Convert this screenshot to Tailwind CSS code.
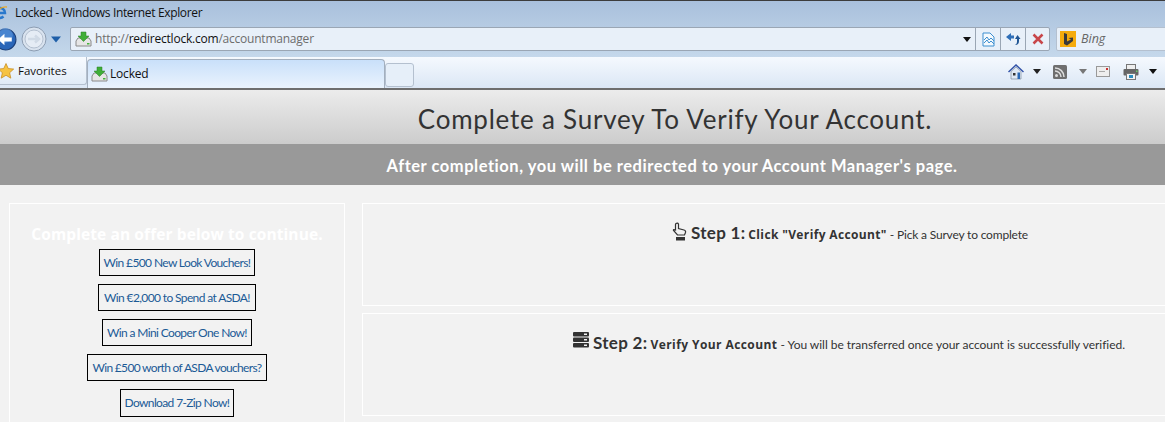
<!DOCTYPE html>
<html lang="en">
  <head>
    <meta charset="UTF-8" />
    <script src="https://cdn.jsdelivr.net/npm/@tailwindcss/browser@4"></script>
    <title>Locked</title>
  </head>
  <body class="bg-[#f2f2f2] w-[1165px] h-[422px] overflow-hidden font-['Lato',sans-serif]">
    <!-- browser chrome -->
    <div class="h-[90px] border-t border-t-[#3c3c3c] border-b-2 border-b-[#6e6e6e] flex flex-col">
      <div class="h-[56px] bg-gradient-to-b from-[#a9c0dc] to-[#c5d8eb] flex flex-col">
        <div class="h-[24px] flex items-center -ml-[8px]">
          <svg width="16" height="16" viewBox="0 0 16 16">
            <path d="M3 8 H13 A5 5 0 1 0 11.500 11.500" fill="none" stroke="#2a78cc" stroke-width="2.500" />
            <path d="M1 13 Q6 1 15 2" fill="none" stroke="#e8a92c" stroke-width="1.300" />
          </svg>
          <span class="text-[12px] text-[#111] font-['Open_Sans',sans-serif] tracking-[-0.35px] ml-[7px]">Locked - Windows Internet Explorer</span>
        </div>
        <div class="h-[26px] flex items-center pt-[2px]">
          <div class="w-[70px] shrink-0 flex items-center relative h-full">
            <svg class="-ml-[6px]" width="23" height="23" viewBox="0 0 22 22">
              <circle cx="11" cy="11" r="10" fill="#2a66b8" stroke="#1c3f78" />
              <circle cx="11" cy="7" r="7" fill="#5f9ae0" opacity=".6" />
              <path d="M4 11 L10 5.500 V9 H17 V13 H10 V16.500 Z" fill="#fff" />
            </svg>
            <svg class="ml-[4px]" width="26" height="26" viewBox="0 0 26 26">
              <circle cx="13" cy="13" r="12" fill="#d9e3ef" stroke="#8d9db2" />
              <circle cx="13" cy="13" r="9" fill="#e5ecf5" stroke="#b4c0d0" />
              <path d="M7 13 H17 M14 9.500 L18 13 L14 16.500" fill="none" stroke="#d0dae6" stroke-width="2.500" />
            </svg>
            <svg class="ml-[4px]" width="10" height="7" viewBox="0 0 10 7">
              <path d="M0 0.500 H10 L5 6.500 Z" fill="#1f5fa8" />
            </svg>
          </div>
          <div class="w-[980px] h-[24px] shrink-0 bg-[#e8f0f9] border border-[#9aa6b4] rounded-[2px] flex items-center">
            <svg class="ml-[4px]" width="17" height="17" viewBox="0 0 17 17">
              <path d="M1 10 L3 7 H14 L16 10 V15 H1 Z" fill="#e6e6e6" stroke="#8a8a8a" />
              <path d="M6 1 H11 V5 H14 L8.500 10.500 L3 5 H6 Z" fill="#3fae38" stroke="#2a7f26" stroke-width=".5" />
              <rect x="12" y="12" width="2.500" height="1.500" fill="#45b33c" />
            </svg>
            <span class="ml-[3px] text-[12px] text-[#6d6d6d] font-['Open_Sans',sans-serif] tracking-[-0.22px]">http://<span class="text-[#111]">redirectlock.com</span>/accountmanager</span>
            <div class="ml-auto w-[17px] flex justify-center">
              <svg width="8" height="5" viewBox="0 0 8 5"><path d="M0 0 H8 L4 5 Z" fill="#111" /></svg>
            </div>
            <div class="w-[25px] h-full border-l border-[#9aa6b4] flex items-center justify-center">
              <svg width="13" height="15" viewBox="0 0 13 15">
                <path d="M1 1 H8 L12 5 V14 H1 Z" fill="#f4f9fd" stroke="#3d8fd0" />
                <path d="M2 8 L5 5 L7 8 L9 6 L12 9 M2 11 L5 8 L7 11 L9 9 L12 12" fill="none" stroke="#3d8fd0" />
              </svg>
            </div>
            <div class="w-[25px] h-full border-l border-[#9aa6b4] flex items-center justify-center">
              <svg width="15" height="14" viewBox="0 0 15 14">
                <path d="M0 5 L5 1 V3.500 H8 V6.500 H5 V9 Z" fill="#2f6fb8" />
                <path d="M14.500 7 L11.500 3 L9 7 H11 V10 Q11 12 9 13 Q13 13 13 9 V7 Z" fill="#1f5594" />
              </svg>
            </div>
            <div class="w-[24px] h-full border-l border-[#9aa6b4] flex items-center justify-center">
              <svg width="12" height="12" viewBox="0 0 12 12"><path d="M1.500 1.500 L10.500 10.500 M10.500 1.500 L1.500 10.500" stroke="#c8464a" stroke-width="2.500" /></svg>
            </div>
          </div>
          <div class="ml-[6px] w-[115px] h-[24px] shrink-0 bg-[#e8f0f9] border border-[#b4c0cf] rounded-[2px] flex items-center">
            <div class="ml-[3px] w-[16px] h-[16px] bg-[#f5ab0c] flex items-center justify-center">
              <svg width="11" height="13" viewBox="0 0 11 13"><path d="M1 0 L4 1 V8.500 L8 6.500 L5.500 5 L10 4.500 V8 L4 12.500 L1 11 Z" fill="#3a3a3a" /></svg>
            </div>
            <span class="ml-[5px] text-[12.5px] italic text-[#666] font-['Open_Sans',sans-serif]">Bing</span>
          </div>
        </div>
      </div>
      <div class="flex-1 bg-gradient-to-b from-[#f5f9fe] to-[#dbe7f5] flex items-end">
        <div class="w-[87px] h-[28px] mb-[3px] shrink-0 flex items-center bg-gradient-to-b from-[#f8fbff] to-[#e0ebf7] border-r border-b border-[#b4c0cf] rounded-br-[3px]">
          <svg class="-ml-[2px]" width="16" height="16" viewBox="0 0 15 15">
            <path d="M7.500 0.500 L9.600 5.200 L14.700 5.700 L10.900 9.100 L12 14.200 L7.500 11.500 L3 14.200 L4.100 9.100 L0.300 5.700 L5.400 5.200 Z" fill="#f6c343" stroke="#c78a1e" stroke-width=".7" />
          </svg>
          <span class="ml-[4px] text-[11.5px] text-[#111] font-['Open_Sans',sans-serif]">Favorites</span>
        </div>
        <div class="w-[298px] h-[29px] shrink-0 bg-gradient-to-b from-[#c9e0fa] to-[#eaf3fd] border border-b-0 border-[#a3afbe] rounded-t-[4px] flex items-center">
          <svg class="ml-[3px]" width="17" height="17" viewBox="0 0 17 17">
            <path d="M1 10 L3 7 H14 L16 10 V15 H1 Z" fill="#e6e6e6" stroke="#8a8a8a" />
            <path d="M6 1 H11 V5 H14 L8.500 10.500 L3 5 H6 Z" fill="#3fae38" stroke="#2a7f26" stroke-width=".5" />
            <rect x="12" y="12" width="2.500" height="1.500" fill="#45b33c" />
          </svg>
          <span class="ml-[2px] text-[12px] text-[#111] font-['Open_Sans',sans-serif] tracking-[-0.2px]">Locked</span>
        </div>
        <div class="w-[29px] h-[24px] mb-[1px] shrink-0 bg-[#e6eff9] border border-[#b4c0cf] rounded-[3px]"></div>
        <div class="ml-auto h-full flex items-center text-[#111] pb-[2px]">
          <svg width="16" height="16" viewBox="0 0 16 16">
            <path d="M0.500 8 L8 1 L15.500 8" fill="none" stroke="#3353a8" stroke-width="1.500" />
            <path d="M3 7.500 L8 3 L13 7.500 V15 H3 Z" fill="#dfe8f3" stroke="#6b7c92" stroke-width=".6" />
            <rect x="5" y="9" width="2.500" height="2.500" fill="#333" />
            <rect x="9.500" y="8.500" width="2.500" height="6.500" fill="#2b68b4" />
          </svg>
          <svg class="ml-[9px]" width="8" height="5" viewBox="0 0 8 5"><path d="M0 0 H8 L4 5 Z" fill="#222" /></svg>
          <svg class="ml-[12px]" width="14" height="14" viewBox="0 0 14 14">
            <rect width="14" height="14" rx="1.500" fill="#6f6f6f" />
            <circle cx="3.500" cy="10.500" r="1.500" fill="#ddd" />
            <path d="M2 6 A6 6 0 0 1 8 12 M2 3 A9 9 0 0 1 11 12" fill="none" stroke="#ddd" stroke-width="1.500" />
          </svg>
          <svg class="ml-[12px]" width="8" height="5" viewBox="0 0 8 5"><path d="M0 0 H8 L4 5 Z" fill="#777" /></svg>
          <svg class="ml-[9px]" width="14" height="11" viewBox="0 0 14 11">
            <rect x=".5" y=".5" width="13" height="10" fill="#eee" stroke="#999" />
            <rect x="3" y="5" width="6" height="1" fill="#aaa" />
            <rect x="10" y="2" width="2" height="2" fill="#c33" />
          </svg>
          <svg class="ml-[13px]" width="16" height="16" viewBox="0 0 16 16">
            <rect x="3.500" y="0.500" width="9" height="5" fill="#eee" stroke="#777" />
            <rect x="0.500" y="5" width="15" height="6.500" rx="1" fill="#666" />
            <rect x="3.500" y="9.500" width="9" height="6" fill="#f4f4f4" stroke="#777" />
            <rect x="6" y="11" width="4" height="3" fill="#2b8fc0" />
            <rect x="13" y="6.500" width="1.500" height="1.500" fill="#6c6" />
          </svg>
          <svg class="ml-[10px] mr-[8px]" width="8" height="5" viewBox="0 0 8 5"><path d="M0 0 H8 L4 5 Z" fill="#111" /></svg>
        </div>
      </div>
    </div>

    <!-- page -->
    <h1 class="h-[54px] bg-gradient-to-b from-[#ececec] to-[#cccccc] flex items-center justify-center pl-[185px] pt-[4px] text-[26px] leading-none text-[#333] tracking-[0.77px]">Complete a Survey To Verify Your Account.</h1>
    <h2 class="h-[41px] bg-[#999999] flex items-center justify-center pl-[179px] pt-[4px] text-[16.500px] font-bold text-white tracking-[0.53px]">After completion, you will be redirected to your Account Manager's page.</h2>

    <div class="mt-[18px] pl-[9px] flex items-start gap-[17px]">
      <div class="w-[336px] h-[240px] shrink-0 border border-white flex flex-col items-center pt-[20px]">
        <h3 class="text-[15.500px] leading-[20px] font-bold text-white font-['Open_Sans',sans-serif] tracking-[0.1px]">Complete an offer below to continue.</h3>
        <div class="mt-[5px] flex flex-col items-center gap-[8px]">
          <a class="h-[27px] px-[4px] flex items-center border border-black text-[12px] tracking-[-0.63px] text-[#1b5a96]">Win £500 New Look Vouchers!</a>
          <a class="h-[27px] px-[5px] flex items-center border border-black text-[12px] tracking-[-0.63px] text-[#1b5a96]">Win €2,000 to Spend at ASDA!</a>
          <a class="h-[27px] px-[4px] flex items-center border border-black text-[12px] tracking-[-0.63px] text-[#1b5a96]">Win a Mini Cooper One Now!</a>
          <a class="h-[27px] px-[5px] flex items-center border border-black text-[12px] tracking-[-0.68px] text-[#1b5a96]">Win £500 worth of ASDA vouchers?</a>
          <a class="h-[28px] px-[4px] flex items-center border border-black text-[12px] tracking-[-0.63px] text-[#1b5a96]">Download 7-Zip Now!</a>
        </div>
      </div>
      <div class="flex-1 -mr-[10px] flex flex-col gap-[7px]">
        <div class="h-[103px] border border-white pl-[309px] pt-[13px] flex items-start text-[#333]">
          <svg class="mt-[5px]" width="16" height="20" viewBox="0 0 16 20">
            <path d="M4 1.500 Q5.500 0.500 6.500 2 V6.500 L12 8 Q14 8.500 13.500 10.500 L12.500 13 H5.500 L1.500 8.500 Q1 7 3.500 8 V2.500 Z" fill="none" stroke="#333" stroke-width="1.200" />
            <rect x="4" y="15" width="9" height="3.500" fill="#333" />
          </svg>
          <p class="ml-[3px] mt-[1px] text-[12px] leading-[30px] whitespace-nowrap tracking-[-0.18px]"><span class="text-[17px] font-bold tracking-[0.3px]">Step 1:</span> <span class="font-bold font-['Open_Sans',sans-serif] text-[12px] tracking-[0.36px]">Click "Verify Account"</span> - Pick a Survey to complete</p>
        </div>
        <div class="h-[103px] border border-white pl-[210px] pt-[13px] flex items-start text-[#333]">
          <svg class="mt-[5px]" width="16" height="16" viewBox="0 0 16 16">
            <rect y="0" width="16" height="4.500" rx="1" fill="#333" />
            <rect y="5.500" width="16" height="4.500" rx="1" fill="#333" />
            <rect y="11" width="16" height="4.500" rx="1" fill="#333" />
            <rect x="11" y="1.500" width="3" height="1.500" fill="#f2f2f2" />
            <rect x="11" y="7" width="3" height="1.500" fill="#f2f2f2" />
            <rect x="11" y="12.500" width="3" height="1.500" fill="#f2f2f2" />
          </svg>
          <p class="ml-[4px] mt-[1px] text-[12px] leading-[30px] whitespace-nowrap tracking-[-0.03px]"><span class="text-[17px] font-bold tracking-[0.3px]">Step 2:</span> <span class="font-bold font-['Open_Sans',sans-serif] text-[12px] tracking-[0.42px]">Verify Your Account</span> - You will be transferred once your account is successfully verified.</p>
        </div>
      </div>
    </div>
  </body>
</html>
